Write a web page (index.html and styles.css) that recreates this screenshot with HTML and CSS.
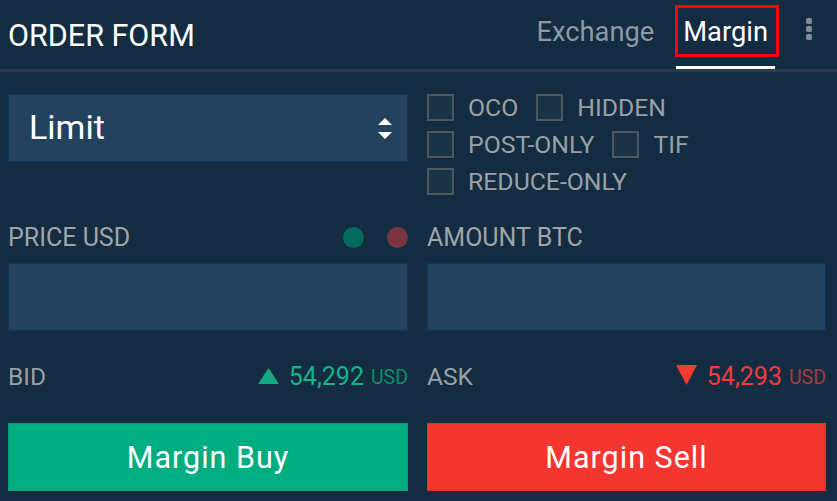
FILE: index.html
```html
<!DOCTYPE html>
<html>
<head>
<meta charset="utf-8">
<title>Order Form</title>
<link rel="stylesheet" href="styles.css">
</head>
<body>
<div class="panel">
  <header class="header">
    <h1 class="title">ORDER FORM</h1>
    <nav class="tabs">
      <span class="tab">Exchange</span>
      <span class="tab active">Margin<span class="annot"></span></span>
    </nav>
    <div class="kebab"><i></i><i></i><i></i></div>
  </header>
  <main class="form">
    <div class="select">
      <span>Limit</span>
      <svg class="updown" width="16" height="22" viewBox="0 0 16 22"><polygon points="8,0 15,7 1,7" fill="#fff"/><polygon points="1,11 15,11 8,18" fill="#fff" transform="translate(0,3)"/></svg>
    </div>
    <div class="checks">
      <div class="check-row">
        <label class="check"><span class="box"></span>OCO</label>
        <label class="check"><span class="box"></span>HIDDEN</label>
      </div>
      <div class="check-row">
        <label class="check"><span class="box"></span>POST-ONLY</label>
        <label class="check"><span class="box"></span>TIF</label>
      </div>
      <div class="check-row">
        <label class="check"><span class="box"></span>REDUCE-ONLY</label>
      </div>
    </div>

    <div class="field-label">
      <span>PRICE USD</span>
      <span class="dots"><i class="dot green"></i><i class="dot red"></i></span>
    </div>
    <div class="field-label"><span>AMOUNT BTC</span></div>

    <div class="input"></div>
    <div class="input"></div>

    <div class="quote">
      <span>BID</span>
      <span class="price up"><svg width="21" height="16" viewBox="0 0 21 16"><polygon points="10.5,0 21,16 0,16" fill="#12a980"/></svg><b>54,292</b><small>USD</small></span>
    </div>
    <div class="quote">
      <span>ASK</span>
      <span class="price down"><svg width="21" height="20" viewBox="0 0 21 20"><polygon points="0,0 21,0 10.5,20" fill="#f43a36"/></svg><b>54,293</b><small>USD</small></span>
    </div>

    <button class="btn buy">Margin Buy</button>
    <button class="btn sell">Margin Sell</button>
  </main>
</div>
</body>
</html>
```

FILE: styles.css
```css
* { box-sizing: border-box; }
html, body { margin: 0; padding: 0; }
body {
  background: #132c41;
  font-family: Roboto, "Liberation Sans", sans-serif;
  width: 837px;
  height: 501px;
  overflow: hidden;
}
.panel { width: 837px; }

.header {
  display: flex;
  align-items: stretch;
  height: 72px;
  padding: 0 0 0 8px;
  border-bottom: 3px solid #2a3c4c;
}
.title {
  margin: 0;
  flex: 1;
  align-self: center;
  font-size: 30.5px;
  font-weight: 400;
  color: #ffffff;
  line-height: 36px;
  padding-top: 2px;
}
.tabs { display: flex; align-items: stretch; gap: 15px; }
.tab {
  position: relative;
  display: flex;
  align-items: center;
  padding: 0 7px 2px;
  font-size: 27.3px;
  color: #8c99a4;
  border-bottom: 3px solid transparent;
}
.tab.active {
  color: #ffffff;
  border-bottom-color: #ffffff;
}
.annot {
  position: absolute;
  left: -1px;
  top: 5px;
  width: 104px;
  height: 52px;
  border: 3px solid #ff0000;
}
.kebab {
  display: flex;
  flex-direction: column;
  justify-content: center;
  gap: 2px;
  margin: 0 25px 0 31px;
  padding-bottom: 12px;
}
.kebab i {
  display: block;
  width: 6px;
  height: 6px;
  border-radius: 1.5px;
  background: #7f8b95;
}

.form {
  display: grid;
  grid-template-columns: 400px 399px;
  column-gap: 19px;
  padding: 22px 0 0 8px;
}
.select {
  height: 68px;
  background: #22425e;
  border: 1px solid #0c3760;
  display: flex;
  align-items: center;
  justify-content: space-between;
  padding: 0 14px 0 20px;
  color: #fff;
  font-size: 34px;
}
.select span { margin-top: -2px; }
.updown { margin-top: 1px; }

.checks { display: flex; flex-direction: column; gap: 10px; }
.check-row { display: flex; }
.check {
  display: flex;
  align-items: center;
  font-size: 24.8px;
  color: #9aa0a5;
  margin-right: 18px;
  height: 27px;
}
.box {
  width: 27px;
  height: 27px;
  border: 2px solid #4c5760;
  background: #1a3347;
  margin-right: 14px;
}

.field-label {
  display: flex;
  justify-content: space-between;
  align-items: center;
  margin-top: 28px;
  height: 28px;
  font-size: 25px;
  color: #a0a4a8;
}
.dots { display: flex; gap: 23px; }
.dot { display: block; width: 21px; height: 21px; border-radius: 50%; }
.dot.green { background: #006b5f; }
.dot.red { background: #7a3440; }

.input {
  margin-top: 12px;
  height: 68px;
  background: #22425e;
  border: 1px solid #0c3760;
}

.quote {
  margin-top: 31px;
  height: 28px;
  display: flex;
  justify-content: space-between;
  align-items: center;
  font-size: 24.5px;
  color: #9aa0a5;
}
.price { display: flex; align-items: center; font-size: 25px; }
.price svg { margin-right: 10px; }
.price b { font-weight: 400; }
.price small { font-size: 19.5px; margin-left: 7px; margin-top: 3px; }
.price.up b { color: #17b28b; }
.price.up small { color: #0f8c6d; }
.price.down svg { margin-top: -2px; }
.price.down b { color: #f43a3a; }
.price.down small { color: #a63a3d; }

.btn {
  margin-top: 33px;
  height: 68px;
  border: 1px solid transparent;
  font-family: Roboto, "Liberation Sans", sans-serif;
  font-size: 30.5px;
  letter-spacing: 1px;
  color: #ffffff;
  padding: 0;
}
.btn.buy { background: #00ad80; border-color: #0d9a75; }
.btn.sell { background: #f5352f; border-color: #d83530; }
```
